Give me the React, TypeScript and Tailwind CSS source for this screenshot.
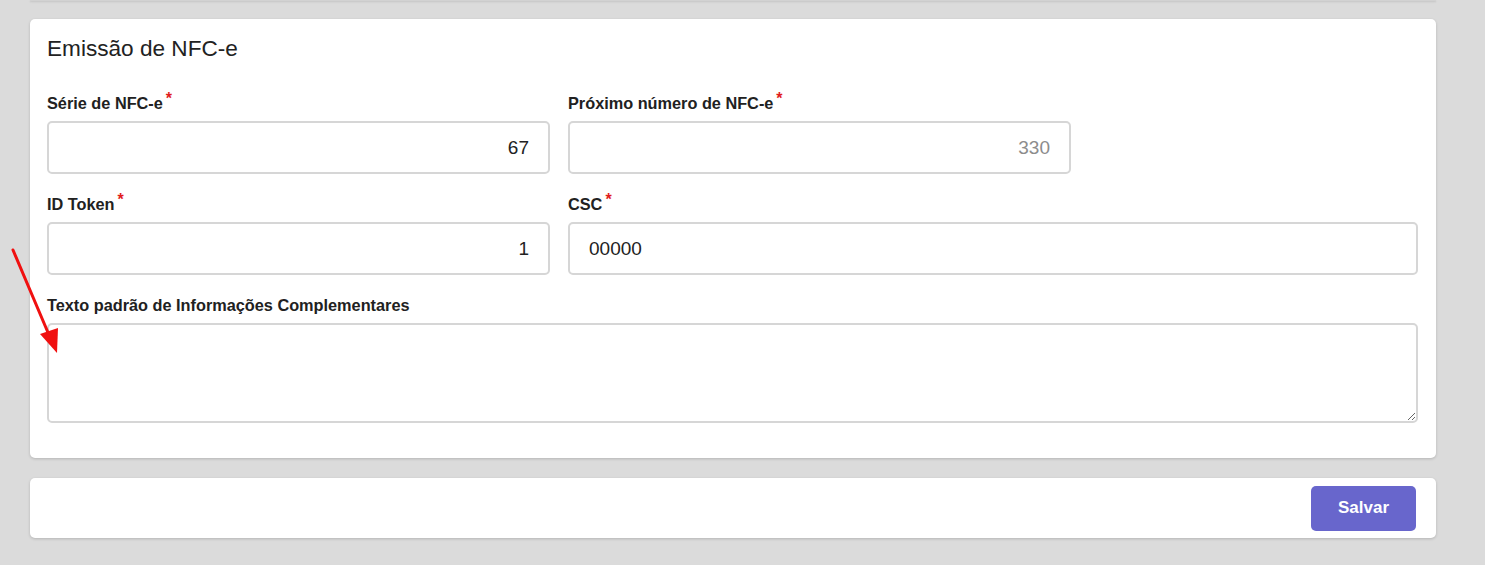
import { useState } from 'react';

function Label({ text, required = true }: { text: string; required?: boolean }) {
  return (
    <label className="mb-[10px] flex h-[18px] items-start text-[16.3px] font-bold leading-[18px] text-[#212121]">
      <span className="mt-[1px]">{text}</span>
      {required && <span className="ml-[3px] text-[16px] leading-[12px] text-[#e11d1d]">*</span>}
    </label>
  );
}

const inputClass =
  'h-[53px] w-full rounded-[5px] border-2 border-[#d6d6d6] bg-white px-[19px] text-[19px] text-[#222] outline-none';

export default function App() {
  const [serie, setSerie] = useState('67');
  const [token, setToken] = useState('1');
  const [csc, setCsc] = useState('00000');
  const [texto, setTexto] = useState('');

  return (
    <div className="relative min-h-[565px] w-[1485px] bg-[#dbdbdb] font-['Liberation_Sans',Arial,sans-serif]">
      <div className="ml-[30px] h-[1px] w-[1406px] bg-[#d2d2d2] shadow-[0_1px_2px_rgba(0,0,0,0.15)]" />

      <div className="ml-[30px] mt-[18px] w-[1406px] rounded-[5px] bg-white px-[17px] pb-[35px] pt-[18px] shadow-[0_1px_3px_rgba(0,0,0,0.18)]">
        <h2 className="text-[22.6px] leading-[24px] text-[#222]">Emissão de NFC-e</h2>

        <div className="mt-[32px] grid grid-cols-[503px_503px] gap-x-[18px]">
          <div>
            <Label text="Série de NFC-e" />
            <input className={inputClass + ' text-right'} value={serie} onChange={(e) => setSerie(e.target.value)} />
          </div>
          <div>
            <Label text="Próximo número de NFC-e" />
            <input className={inputClass + ' text-right placeholder:text-[#8c8c8c]'} placeholder="330" />
          </div>
        </div>

        <div className="mt-[20px] grid grid-cols-[503px_850px] gap-x-[18px]">
          <div>
            <Label text="ID Token" />
            <input className={inputClass + ' text-right'} value={token} onChange={(e) => setToken(e.target.value)} />
          </div>
          <div>
            <Label text="CSC" />
            <input className={inputClass} value={csc} onChange={(e) => setCsc(e.target.value)} />
          </div>
        </div>

        <div className="mt-[20px]">
          <Label text="Texto padrão de Informações Complementares" required={false} />
          <textarea
            className="block h-[100px] w-[1371px] rounded-[5px] border-2 border-[#d6d6d6] bg-white px-[19px] py-[10px] text-[19px] text-[#222] outline-none"
            value={texto}
            onChange={(e) => setTexto(e.target.value)}
          />
        </div>
      </div>

      <div className="ml-[30px] mt-[20px] flex h-[60px] w-[1406px] items-center justify-end rounded-[5px] bg-white pr-[20px] shadow-[0_1px_3px_rgba(0,0,0,0.18)]">
        <button
          type="button"
          className="h-[45px] w-[105px] rounded-[5px] bg-[#6866cc] text-[17px] font-bold text-white"
        >
          Salvar
        </button>
      </div>

      <svg className="pointer-events-none absolute left-0 top-[240px]" width="80" height="120" viewBox="0 0 80 120">
        <line x1="13" y1="10" x2="52" y2="102" stroke="#f01010" strokeWidth="3" strokeLinecap="round" />
        <polygon points="57,113 40,94 58,88" fill="#f01010" />
      </svg>
    </div>
  );
}
